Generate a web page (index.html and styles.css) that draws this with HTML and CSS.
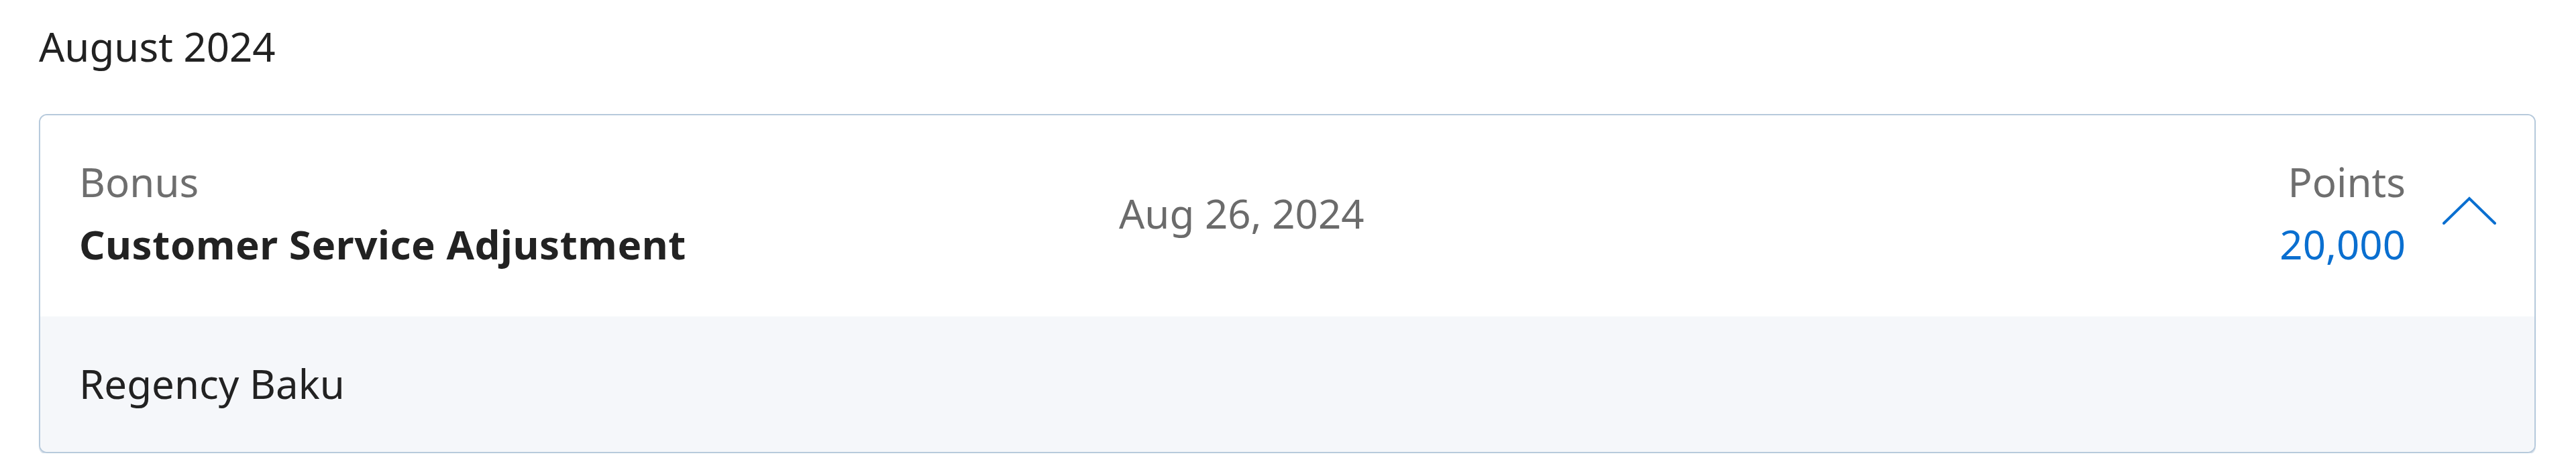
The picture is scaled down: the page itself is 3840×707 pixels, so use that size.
FILE: index.html
```html
<!DOCTYPE html>
<html lang="en">
<head>
<meta charset="utf-8">
<title>Activity</title>
<link rel="stylesheet" href="styles.css">
</head>
<body>
<section class="month">
  <h2 class="month-title">August 2024</h2>
  <article class="card">
    <div class="card-head">
      <div class="col-type">
        <div class="label">Bonus</div>
        <div class="title">Customer Service Adjustment</div>
      </div>
      <div class="col-date">Aug 26, 2024</div>
      <div class="col-points">
        <div class="label">Points</div>
        <div class="points">20,000</div>
      </div>
      <button class="toggle" aria-label="Collapse">
        <svg viewBox="0 0 80 42" width="80" height="42"><polyline points="2,40 40,3 78,40" fill="none" stroke="#0a6fd0" stroke-width="4" stroke-linecap="round" stroke-linejoin="miter"/></svg>
      </button>
    </div>
    <div class="card-body">Regency Baku</div>
  </article>
</section>
</body>
</html>
```

FILE: styles.css
```css
html, body {
  margin: 0;
  padding: 0;
  background: #ffffff;
}
body {
  font-family: "Noto Sans", "Open Sans", sans-serif;
  font-size: 60px;
  line-height: 93px;
  color: #222222;
}
.month {
  padding: 23px 60px 0 58px;
}
.month-title {
  margin: 0 0 54px 0;
  font-size: 60px;
  font-weight: 400;
  line-height: 93px;
  color: #222222;
}
.card {
  border: 2px solid #b7cadc;
  border-radius: 12px;
  overflow: hidden;
  box-shadow: 0 2px 1px rgba(150, 175, 200, 0.45);
}
.card-head {
  display: flex;
  align-items: center;
  padding: 53px 57px 61px 58px;
  background: #ffffff;
}
.col-type {
  flex: 0 0 1550px;
}
.col-date {
  flex: 1 1 auto;
  color: #6b6b6b;
}
.col-points {
  text-align: right;
}
.label {
  color: #6e6e6e;
}
.title {
  font-weight: 700;
  letter-spacing: 0.55px;
  color: #222222;
}
.points {
  color: #0a6fd0;
}
.toggle {
  margin-left: 55px;
  padding: 0;
  border: 0;
  background: none;
  display: flex;
  align-items: center;
  height: 80px;
  margin-bottom: 8px;
}
.toggle svg {
  display: block;
}
.card-body {
  background: #f5f7fa;
  padding: 54px 58px 55px;
  color: #222222;
}
```
